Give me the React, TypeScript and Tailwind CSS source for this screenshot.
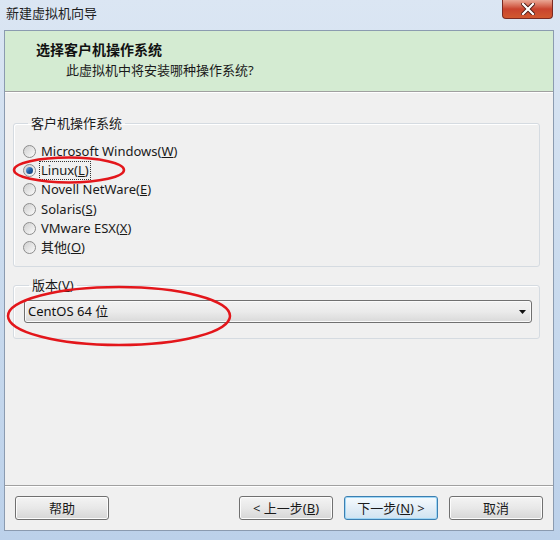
import React from "react";

const font = "font-['Noto_Sans','Noto_Sans_CJK_SC',sans-serif]";

type Option = { label: string; key: string; rest?: string; checked?: boolean };

const options: Option[] = [
  { label: "Microsoft Windows(", key: "W", rest: ")" },
  { label: "Linux(", key: "L", rest: ")", checked: true },
  { label: "Novell NetWare(", key: "E", rest: ")" },
  { label: "Solaris(", key: "S", rest: ")" },
  { label: "VMware ESX(", key: "X", rest: ")" },
  { label: "其他(", key: "O", rest: ")" },
];

function Radio({ checked }: { checked?: boolean }) {
  return (
    <span className="w-[13px] h-[13px] rounded-full border border-[#8d8d8d] bg-gradient-to-br from-[#cfcfcf] to-[#fbfbfb] flex items-center justify-center shrink-0">
      {checked && (
        <span className="w-[7px] h-[7px] rounded-full bg-gradient-to-br from-[#7fb3e6] via-[#1f5fa8] to-[#0d3a70]" />
      )}
    </span>
  );
}

function Button({ children, focused, className }: { children: React.ReactNode; focused?: boolean; className?: string }) {
  return (
    <button
      className={
        "h-[24px] w-[94px] rounded-[3px] border text-[13px] leading-none text-[#1a1a1a] flex items-center justify-center " +
        (focused
          ? "border-[#3c7fb1] bg-gradient-to-b from-[#f6fbfe] via-[#e3eef7] to-[#cfe3f1] shadow-[inset_0_0_0_1px_#9fd6f5] "
          : "border-[#707070] bg-gradient-to-b from-[#f4f4f4] via-[#e8e8e8] to-[#d6d6d6] shadow-[inset_0_0_0_1px_#fcfcfc] ") +
        (className ?? "")
      }
    >
      {children}
    </button>
  );
}

export default function App() {
  return (
    <div className={"relative w-[560px] h-[540px] overflow-hidden flex flex-col bg-gradient-to-b from-[#dbe6f3] via-[#cadbee] to-[#bcd1ea] " + font}>
      {/* Title bar */}
      <div className="h-[30px] flex items-start justify-between shrink-0">
        <span className="pl-[6px] pt-[4px] text-[13px] leading-[18px] text-[#1e1e1e]">新建虚拟机向导</span>
        <div className="mr-[7px] w-[51px] h-[19px] rounded-b-[4px] border border-t-0 border-[#7a2a22] bg-gradient-to-b from-[#e9a795] via-[#c9432e] to-[#d1582f] flex items-center justify-center">
          <svg width="14" height="12" viewBox="0 0 14 12">
            <path d="M2 1 L12 11 M12 1 L2 11" stroke="#4a1a14" strokeWidth="4" strokeLinecap="square" />
            <path d="M2 1 L12 11 M12 1 L2 11" stroke="#ffffff" strokeWidth="2.2" strokeLinecap="square" />
          </svg>
        </div>
      </div>

      {/* Client area */}
      <div className="ml-[4px] mr-[6px] mb-[9px] flex-1 flex flex-col border border-[#8b9bb0] bg-[#f0f0f0]">
        {/* Header */}
        <div className="h-[61px] shrink-0 bg-[#d4ebd2] border-b border-[#a0a0a0] shadow-[0_1px_0_#ffffff] pl-[31px] pt-[9px]">
          <div className="text-[14px] leading-[20px] font-bold text-[#111]">选择客户机操作系统</div>
          <div className="pl-[30px] text-[13px] leading-[20px] text-[#1a1a1a]">此虚拟机中将安装哪种操作系统?</div>
        </div>

        {/* Body */}
        <div className="flex-1 pl-[8px] pr-[13px] pt-[23px]">
          <fieldset className="border border-[#d5dbe1] rounded-[3px] pl-[9px] pb-[9px] shadow-[inset_1px_1px_0_#ffffff]">
            <legend className="ml-[5px] px-[3px] text-[13px] leading-[16px] text-[#1a1a1a]">客户机操作系统</legend>
            <div className="flex flex-col pt-[11px]">
              {options.map((o) => (
                <label key={o.key} className="h-[19.2px] flex items-center gap-[4px] text-[13px] text-[#1a1a1a]">
                  <Radio checked={o.checked} />
                  <span className={"px-[1px] leading-[17px] " + (o.checked ? "outline outline-1 outline-dotted outline-[#333]" : "")}>
                    {o.label}
                    <span className="underline">{o.key}</span>
                    {o.rest}
                  </span>
                </label>
              ))}
            </div>
          </fieldset>

          <fieldset className="mt-[10px] border border-[#d5dbe1] rounded-[3px] pl-[10px] pr-[7px] pt-[7px] pb-[15px] shadow-[inset_1px_1px_0_#ffffff]">
            <legend className="ml-[5px] px-[3px] text-[13px] leading-[16px] text-[#1a1a1a]">
              版本(<span className="underline">V</span>)
            </legend>
            <div className="h-[23px] rounded-[3px] border border-[#707070] bg-gradient-to-b from-[#f2f2f2] via-[#ebebeb] to-[#d9d9d9] shadow-[inset_0_0_0_1px_#fafafa] flex items-center justify-between pl-[3px] pr-[5px]">
              <span className="text-[13px] leading-none text-[#111]">CentOS 64 位</span>
              <svg width="7" height="4" viewBox="0 0 7 4">
                <path d="M0 0 H7 L3.5 4 Z" fill="#111" />
              </svg>
            </div>
          </fieldset>
        </div>

        {/* Footer */}
        <div className="h-[45px] shrink-0 border-t border-[#a0a0a0] shadow-[inset_0_1px_0_#ffffff] flex items-start pt-[10px] pl-[10px] pr-[10px]">
          <Button>帮助</Button>
          <div className="ml-auto flex gap-[11px]">
            <Button>&lt; 上一步(<span className="underline">B</span>)</Button>
            <Button focused>下一步(<span className="underline">N</span>) &gt;</Button>
            <Button>取消</Button>
          </div>
        </div>
      </div>

      {/* Red annotation ellipses */}
      <svg className="absolute left-0 top-0 pointer-events-none" width="560" height="540">
        <ellipse cx="69" cy="170" rx="55" ry="12.5" fill="none" stroke="#e3161b" strokeWidth="2.5" />
        <ellipse cx="119" cy="316" rx="111" ry="29" fill="none" stroke="#e3161b" strokeWidth="2.5" />
      </svg>
    </div>
  );
}
